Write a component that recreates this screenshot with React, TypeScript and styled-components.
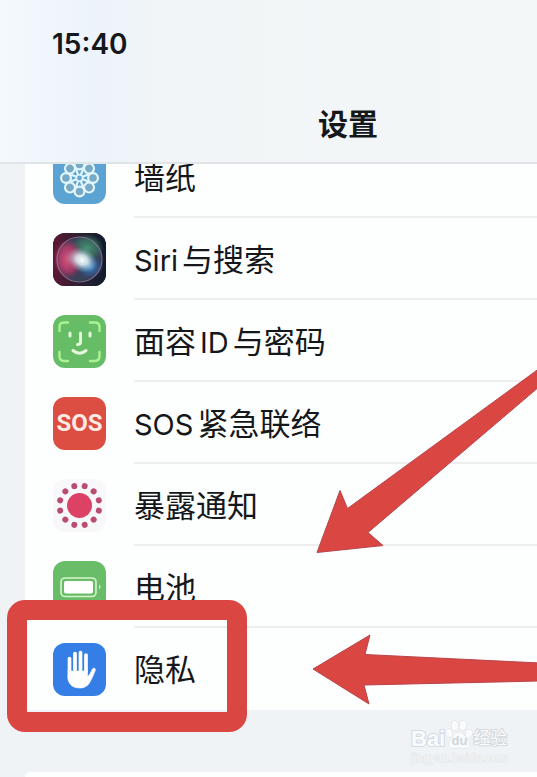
import React from "react";
import styled, { createGlobalStyle } from "styled-components";

const GlobalStyle = createGlobalStyle`
  * { box-sizing: border-box; }
  body {
    margin: 0;
    background: #eff3f6;
    color: #15171a;
    font-family: Inter, "Noto Sans CJK SC", sans-serif;
  }
`;

const Page = styled.main`
  position: relative;
  display: flex;
  flex-direction: column;
  height: 100vh;
  min-height: 776px;
  overflow: hidden;
`;

const Header = styled.header`
  position: relative;
  z-index: 1;
  flex: none;
  display: flex;
  flex-direction: column;
  justify-content: space-between;
  height: 164px;
  padding: 28px 0 20px;
  border-bottom: 2px solid #e0e4e7;
  background: linear-gradient(90deg, #f3f9fd 0%, #edf3fb 18%, #f1f5f7 32%, #f3f7f8 100%);
`;

const Clock = styled.time`
  padding-left: 52px;
  font-size: 28px;
  line-height: 32px;
  font-weight: 600;
`;

const Title = styled.h1`
  margin: 0;
  padding-left: 159px;
  text-align: center;
  font-size: 30px;
  line-height: 36px;
  font-weight: 700;
`;

const Group = styled.ul`
  flex: none;
  list-style: none;
  margin: -28px 0 0 25px;
  padding: 0;
  background: #fdfefe;
`;

const NextGroup = styled.section`
  flex: 1;
  margin: 62px 0 0 25px;
  background: #fdfefe;
  border-top-left-radius: 16px;
`;

const Item = styled.li`
  position: relative;
`;

const Row = styled.button`
  display: flex;
  align-items: center;
  gap: 28px;
  width: 100%;
  height: 82px;
  padding: 0 0 0 28px;
  border: 0;
  background: none;
  color: inherit;
  font: inherit;
  text-align: left;
`;

const Label = styled.span<{ $last?: boolean }>`
  flex: 1;
  display: flex;
  align-items: baseline;
  gap: 4px;
  height: 100%;
  white-space: nowrap;
  font-size: 31px;
  line-height: 84px;
  border-bottom: 2px solid ${(p) => (p.$last ? "transparent" : "#eceeef")};
`;

const Latin = styled.span`
  font-size: 29px;
`;

const Tile = styled.span<{ $bg: string }>`
  flex: none;
  display: grid;
  place-items: center;
  width: 53px;
  height: 53px;
  border-radius: 12px;
  overflow: hidden;
  background: ${(p) => p.$bg};
  svg { display: block; width: 53px; height: 53px; }
`;

const SosText = styled.span`
  color: #fdeae2;
  font-family: Roboto, sans-serif;
  font-size: 24px;
  font-weight: 700;
`;

const Highlight = styled.span`
  position: absolute;
  top: -28px;
  bottom: -22px;
  left: -18px;
  width: 240px;
  border: 20px solid #da4743;
  border-radius: 18px;
  pointer-events: none;
`;

const Arrows = styled.svg`
  position: absolute;
  top: 360px;
  right: 0;
  width: 237px;
  height: 360px;
  pointer-events: none;
`;

const Watermark = styled.div`
  position: absolute;
  right: 28px;
  top: 718px;
  width: 98px;
  color: #fafbfc;
  white-space: nowrap;
  -webkit-text-stroke: 2px #d5dade;
  paint-order: stroke fill;
`;

const Brand = styled.div`
  display: flex;
  align-items: flex-end;
  height: 33px;
  font-family: "Liberation Sans", "Noto Sans CJK SC", sans-serif;
  font-weight: 700;
  svg { flex: none; width: 28px; height: 32px; }
`;

const BrandWord = styled.span<{ $small?: boolean }>`
  font-size: ${(p) => (p.$small ? 17 : 22)}px;
  font-weight: ${(p) => (p.$small ? 400 : 700)};
  line-height: 24px;
`;

const Site = styled.div`
  color: #f4f6f8;
  font-family: "Liberation Sans", sans-serif;
  font-size: 12px;
  line-height: 14px;
  -webkit-text-stroke: 1px #dfe3e6;
`;

const ring = (n: number, start = 0) =>
  Array.from({ length: n }, (_, i) => start + (i * 360) / n);

const WallpaperIcon = () => (
  <svg viewBox="0 0 53 53" fill="none" stroke="#e2f6fc" strokeWidth="2.200">
    {ring(8).map((a) => (
      <circle key={a} cx="26.5" cy="13.500" r="4.900" fill="#78a9c5" transform={`rotate(${a} 26.5 27)`} />
    ))}
    {ring(8, 22.5).map((a) => (
      <path key={a} d="M26.5 23.500V17.500" transform={`rotate(${a} 26.5 27)`} />
    ))}
    <circle cx="26.500" cy="27" r="3.200" fill="#67a9d2" strokeWidth="1.600" />
  </svg>
);

const SiriIcon = () => (
  <svg viewBox="0 0 53 53">
    <defs>
      <linearGradient id="siriBase" x1="0" x2="1">
        <stop offset="0" stopColor="#5b1835" />
        <stop offset=".5" stopColor="#2b2032" />
        <stop offset="1" stopColor="#101b2c" />
      </linearGradient>
      <radialGradient id="siriCore">
        <stop offset="0" stopColor="#fff" />
        <stop offset=".4" stopColor="#dceff4" stopOpacity=".85" />
        <stop offset="1" stopColor="#88a8bc" stopOpacity="0" />
      </radialGradient>
      <radialGradient id="siriPink">
        <stop offset="0" stopColor="#d55a82" />
        <stop offset=".6" stopColor="#b53a68" stopOpacity=".85" />
        <stop offset="1" stopColor="#a82854" stopOpacity="0" />
      </radialGradient>
      <radialGradient id="siriBlue">
        <stop offset="0" stopColor="#3c92d8" />
        <stop offset="1" stopColor="#2054a0" stopOpacity="0" />
      </radialGradient>
      <radialGradient id="siriGreen">
        <stop offset="0" stopColor="#4a8f75" />
        <stop offset=".6" stopColor="#37705f" stopOpacity=".8" />
        <stop offset="1" stopColor="#286856" stopOpacity="0" />
      </radialGradient>
    </defs>
    <rect width="53" height="53" fill="url(#siriBase)" />
    <circle cx="26.5" cy="26.5" r="22" fill="#3b4059" />
    <ellipse cx="34" cy="15" rx="17" ry="14" fill="url(#siriGreen)" />
    <ellipse cx="15" cy="26" rx="15" ry="20" fill="url(#siriPink)" />
    <ellipse cx="37" cy="34" rx="14" ry="12" fill="url(#siriBlue)" />
    <ellipse cx="29" cy="27" rx="16" ry="12" fill="url(#siriCore)" transform="rotate(25 29 27)" />
    <circle cx="26.5" cy="26.5" r="22.500" fill="none" stroke="#9b86a4" strokeWidth="1.200" opacity=".75" />
  </svg>
);

const FaceIcon = () => (
  <svg viewBox="0 0 53 53" fill="none" strokeLinecap="round">
    <g stroke="#aaf394" strokeWidth="2.400">
      <path d="M6.500 16v-4q0-4.500 4.500-4.500h4M37 7.500h5q4.500 0 4.500 4.500v4M46.500 37v4q0 5-5 5H37M15 46h-4q-4.500 0-4.500-5v-4" />
    </g>
    <g stroke="#e5f9da" strokeWidth="3">
      <path d="M17 18v3M37 18v3M27.500 18v9q0 2.500-3 2.500M20 35.500q6.500 5.500 13 0" />
    </g>
  </svg>
);

const ExposureIcon = () => (
  <svg viewBox="0 0 53 53">
    <circle cx="26.500" cy="26.500" r="12.500" fill="#dc4265" />
    {ring(12, 15).map((a) => (
      <circle key={a} cx="26.500" cy="6.500" r="3" fill="#b94d70" transform={`rotate(${a} 26.5 26.5)`} />
    ))}
  </svg>
);

const BatteryIcon = () => (
  <svg viewBox="0 0 53 53">
    <rect x="8" y="17" width="35" height="18.500" rx="4" fill="none" stroke="#d6f5cc" strokeWidth="1.600" />
    <rect x="11" y="20" width="29" height="12.500" rx="2" fill="#fff" />
    <path d="M46 23.500q3 2.500 0 5z" fill="#d6f5cc" />
  </svg>
);

const HandIcon = () => (
  <svg viewBox="0 0 53 53" fill="none" stroke="#fff" strokeLinecap="round" strokeLinejoin="round">
    <path d="M16.500 29V15.500M22 27V10.500M27.500 27V9.500M33 28V12" strokeWidth="3.700" />
    <path
      d="M15.500 28h19v5.500c2-1.200 3.400-4.500 4.600-7 1-2.200 4-1.500 3.200.8-1.500 4.200-3.300 8.200-5.300 11.700-2.200 4-5.500 6-10.500 6-7.500 0-11.800-4.500-11.800-12z"
      fill="#fff"
      strokeWidth=".6"
    />
  </svg>
);

const PawText = styled.text`
  fill: #cfd5da;
  stroke: none;
  -webkit-text-stroke: 0;
  font-size: 14px;
`;

const PawIcon = () => (
  <svg viewBox="0 0 30 34" fill="#fafbfc" stroke="#d5dade">
    <ellipse cx="4.500" cy="15" rx="3.500" ry="4.500" transform="rotate(-12 4.500 15)" />
    <ellipse cx="10.500" cy="7" rx="3.600" ry="5" />
    <ellipse cx="19" cy="7" rx="3.600" ry="5" transform="rotate(10 19 7)" />
    <ellipse cx="25.500" cy="15.500" rx="3.500" ry="4.500" transform="rotate(12 25.500 15.500)" />
    <path d="M15 14c5 0 6 5 9 8 4 4 2 9-3 9-3 0-4-.5-6-.5s-3 .5-6 .5c-5 0-7-5-3-9 3-3 4-8 9-8z" />
    <PawText x="7" y="28">du</PawText>
  </svg>
);

type Entry = {
  label: string[];
  bg: string;
  icon: React.ReactNode;
  highlighted?: boolean;
};

const entries: Entry[] = [
  { label: ["墙纸"], bg: "#5aa3d2", icon: <WallpaperIcon /> },
  { label: ["Siri", "与搜索"], bg: "#24202f", icon: <SiriIcon /> },
  { label: ["面容", "ID", "与密码"], bg: "#67bd65", icon: <FaceIcon /> },
  { label: ["SOS", "紧急联络"], bg: "#dc4d42", icon: <SosText>SOS</SosText> },
  { label: ["暴露通知"], bg: "#f8f7fa", icon: <ExposureIcon /> },
  { label: ["电池"], bg: "#69bd68", icon: <BatteryIcon /> },
  { label: ["隐私"], bg: "#357ee5", icon: <HandIcon />, highlighted: true },
];

export default function App() {
  return (
    <Page>
      <GlobalStyle />
      <Header>
        <Clock>15:40</Clock>
        <Title>设置</Title>
      </Header>
      <Group>
        {entries.map((entry, i) => (
          <Item key={entry.label.join("")}>
            <Row type="button">
              <Tile $bg={entry.bg}>{entry.icon}</Tile>
              <Label $last={i === entries.length - 1}>
                {entry.label.map((part) =>
                  /^[A-Za-z]+$/.test(part) ? (
                    <Latin key={part}>{part}</Latin>
                  ) : (
                    <span key={part}>{part}</span>
                  )
                )}
              </Label>
            </Row>
            {entry.highlighted && <Highlight />}
          </Item>
        ))}
      </Group>
      <NextGroup />
      <Arrows viewBox="0 0 237 360" fill="#da4743" stroke="#b84449" strokeWidth="1">
        <path d="M17 192.500L40 130.500l7.500 18L240 8v18L68 172.500l15 13z" />
        <path d="M13 309l57-34-5 19.500 175 8.500v18l-176 4 5 19z" />
      </Arrows>
      <Watermark>
        <Brand>
          <BrandWord>Bai</BrandWord>
          <PawIcon />
          <BrandWord $small>经验</BrandWord>
        </Brand>
        <Site>jingyan.baidu.com</Site>
      </Watermark>
    </Page>
  );
}
